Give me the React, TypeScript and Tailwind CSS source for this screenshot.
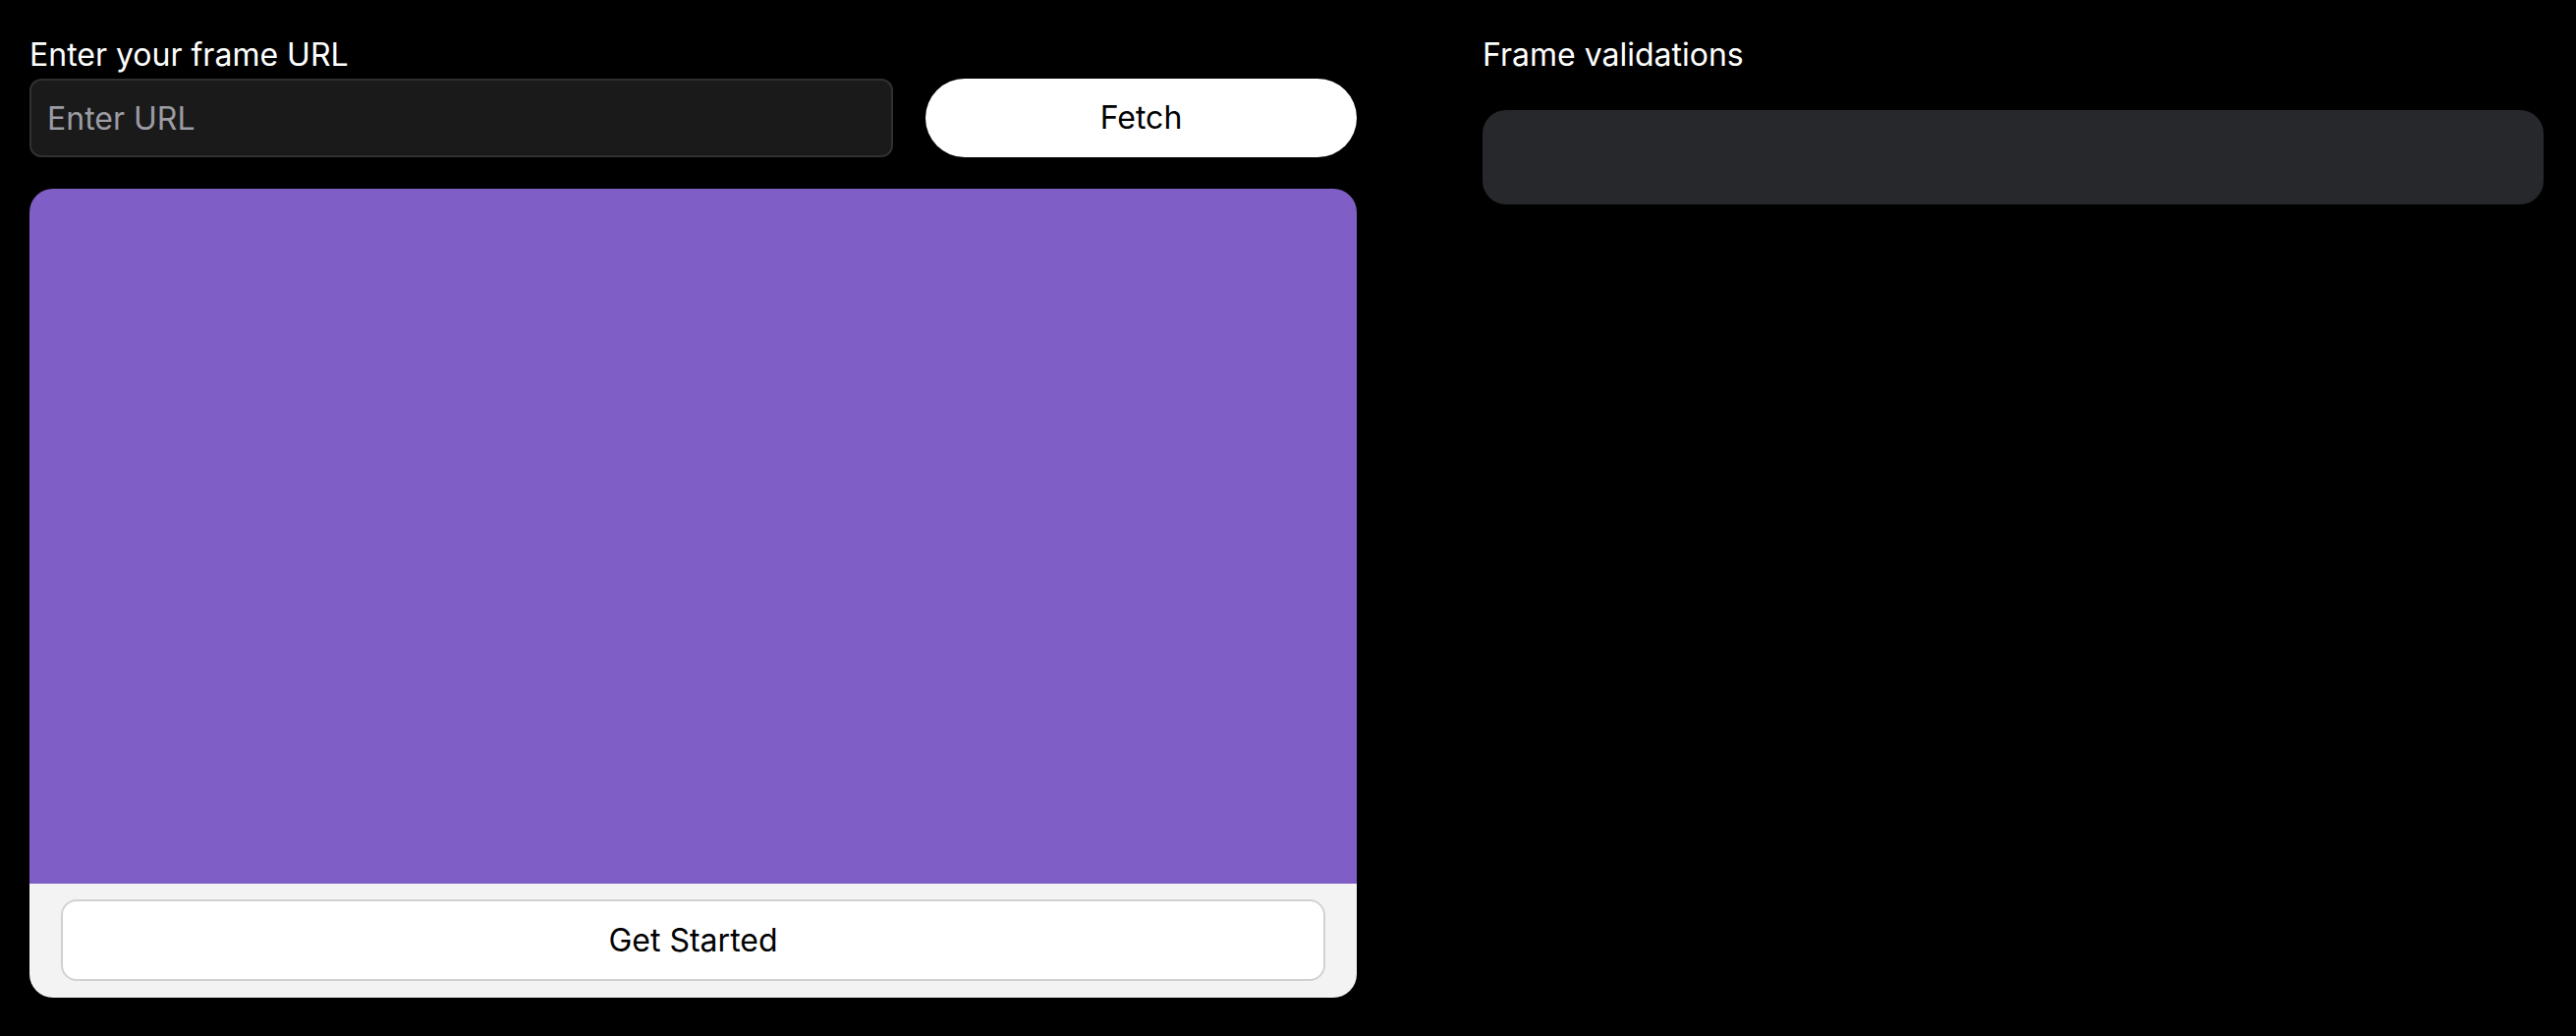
export default function App() {
  return (
    <div className="flex min-h-screen bg-black pl-[30px] pt-8 font-['Inter','Liberation_Sans',sans-serif] text-[32px] leading-[48px]">
      <section className="flex w-[1351px] flex-col">
        <label htmlFor="frame-url" className="text-white">
          Enter your frame URL
        </label>
        <div className="flex gap-[33px]">
          <input
            id="frame-url"
            placeholder="Enter URL"
            className="h-[80px] flex-1 rounded-xl border-2 border-[#303030] bg-[#1a1a1a] px-4 text-[32px] text-white outline-none placeholder:text-[#9b9ca4]"
          />
          <button className="h-[80px] w-[439px] rounded-full bg-white text-black">
            Fetch
          </button>
        </div>
        <div className="mt-8 overflow-hidden rounded-3xl">
          <div className="h-[707px] bg-[#7f5fc5]" />
          <div className="bg-[#f3f3f3] px-8 pb-[17px] pt-4">
            <button className="h-[83px] w-full rounded-2xl border-2 border-[#d1d1d1] bg-white text-black">
              Get Started
            </button>
          </div>
        </div>
      </section>

      <section className="ml-32 w-[1080px]">
        <h2 className="text-white">Frame validations</h2>
        <div className="mt-8 h-24 rounded-3xl bg-[#27282c]" />
      </section>
    </div>
  );
}
